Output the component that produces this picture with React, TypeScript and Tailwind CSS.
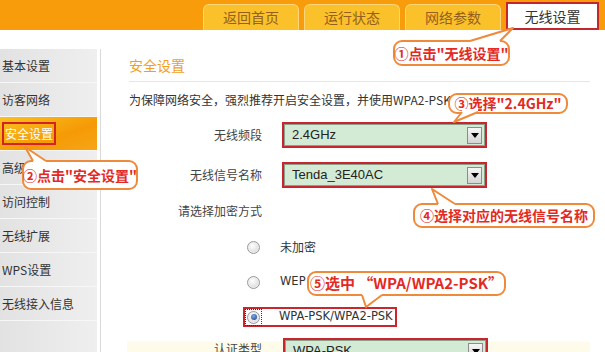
import React from "react";

const tabs = ["返回首页", "运行状态", "网络参数"];
const menu = ["基本设置", "访客网络", "安全设置", "高级设置", "访问控制", "无线扩展", "WPS设置", "无线接入信息"];

function Radio({ checked }: { checked?: boolean }) {
  return (
    <div className="w-[13px] h-[13px] rounded-full border border-[#999999] bg-[radial-gradient(circle_at_40%_35%,#ffffff,#cfcfcf)] shadow-[inset_0_0_0_1px_#eeeeee] flex items-center justify-center shrink-0">
      {checked ? <div className="w-[6px] h-[6px] rounded-full bg-[radial-gradient(circle_at_40%_35%,#7aa8e6,#1d3f86)]" /> : null}
    </div>
  );
}

function Select({ value }: { value: string }) {
  return (
    <div className="w-[205px] h-[26px] border-2 border-[#c8262e] bg-[#d3ebd4] flex items-center justify-between pl-[8px] pr-[3px] shadow-[inset_0_0_0_1px_#8aa08a]">
      <span className="font-['Liberation_Sans',sans-serif] text-[13px] text-[#222]">{value}</span>
      <div className="w-[15px] h-[17px] border border-[#8c8c8c] bg-[linear-gradient(#f6f6f6,#d4d4d4)] flex items-center justify-center">
        <div className="w-0 h-0 border-l-[4px] border-r-[4px] border-t-[5px] border-l-transparent border-r-transparent border-t-black" />
      </div>
    </div>
  );
}

export default function App() {
  return (
    <div className="relative w-[605px] h-[352px] overflow-hidden bg-white font-['Noto_Sans_CJK_SC','Liberation_Sans',sans-serif] text-[#333]">
      {/* top bar */}
      <div className="h-[30px] bg-[#f99c0c] flex items-end pl-[203px] gap-[5px]">
        {tabs.map((t) => (
          <div
            key={t}
            className="w-[96px] h-[26px] rounded-t-[6px] bg-[#fbc12a] border border-b-0 border-[#fdd77a] flex items-center justify-center text-[14px] text-[#946020]"
          >
            {t}
          </div>
        ))}
        <div className="w-[93px] h-[28px] bg-white border-2 border-[#c4262e] flex items-center justify-center text-[14px] text-[#333]">
          无线设置
        </div>
      </div>

      <div className="flex pt-[19px]">
        {/* sidebar */}
        <div className="w-[97px] h-[303px] bg-[linear-gradient(to_right,#e2e2e2,#efefef)] flex flex-col">
          {menu.map((m) =>
            m === "安全设置" ? (
              <div
                key={m}
                className="h-[34px] border-b border-[#f6f6f6] bg-[linear-gradient(160deg,#fbc21e,#f59a06_60%,#f7a516)] flex items-center pl-[2px]"
              >
                <div className="h-[23px] px-[1px] border-2 border-[#d2232a] flex items-center text-[12px] text-white">
                  {m}
                </div>
              </div>
            ) : (
              <div key={m} className="h-[34px] border-b border-[#f7f7f7] flex items-center pl-[2px] text-[12px] text-[#333]">
                {m}
              </div>
            )
          )}
        </div>
        <div className="w-[3px]" />
        {/* content */}
        <div className="flex-1 border-l border-[#d9d9d9] pl-[28px] pr-[15px] flex flex-col">
          <div className="h-[33px] border-b border-[#e6e6e6] flex items-center text-[14px] text-[#f0a01e]">安全设置</div>
          <div className="h-[36px] flex items-center text-[12px] text-[#333] whitespace-nowrap">
            为保障网络安全，强烈推荐开启安全设置，并使用WPA2-PSK AES
          </div>
          <div className="mt-[4px] flex items-center">
            <div className="w-[133px] text-right text-[12px] text-[#444]">无线频段</div>
            <div className="ml-[20px]">
              <Select value="2.4GHz" />
            </div>
          </div>
          <div className="mt-[14px] flex items-center">
            <div className="w-[133px] text-right text-[12px] text-[#444]">无线信号名称</div>
            <div className="ml-[20px]">
              <Select value="Tenda_3E40AC" />
            </div>
          </div>
          <div className="mt-[11px] h-[24px] flex items-center">
            <div className="w-[133px] text-right text-[12px] text-[#444]">请选择加密方式</div>
          </div>
          <div className="mt-[14px] h-[20px] flex items-center pl-[118px]">
            <Radio />
            <span className="ml-[20px] text-[12px] text-[#333]">未加密</span>
          </div>
          <div className="mt-[15px] h-[20px] flex items-center pl-[118px]">
            <Radio />
            <span className="ml-[20px] font-['DejaVu_Sans',sans-serif] text-[11.5px] text-[#333]">WEP</span>
          </div>
          <div className="mt-[15px] ml-[114px] w-[154px] h-[20px] border-2 border-[#cc262d] flex items-center pl-[2px]">
            <div className="outline outline-1 outline-dotted outline-[#333] outline-offset-[1px]">
              <Radio checked />
            </div>
            <span className="ml-[19px] font-['DejaVu_Sans',sans-serif] text-[11.5px] text-[#333] whitespace-nowrap">WPA-PSK/WPA2-PSK</span>
          </div>
          <div className="mt-[11px] -ml-[2px] pl-[2px] flex items-start bg-[linear-gradient(to_bottom,#ffffff_0px,#ffffff_3px,#fefbea_4px)]">
            <div className="w-[133px] pt-[2px] text-right text-[12px] text-[#444]">认证类型</div>
            <div className="ml-[21px]">
              <Select value="WPA-PSK" />
            </div>
          </div>
        </div>
      </div>

      {/* callouts */}
      <div className="absolute left-[393px] top-[40px] w-[117px] h-[26px] rounded-[9px] border-2 border-[#ef8a3b] bg-white flex items-center justify-center text-[14px] font-bold text-[#e42a1f] whitespace-nowrap">
        ①点击"无线设置"
      </div>
      <div className="absolute left-[22px] top-[160px] w-[116px] h-[30px] rounded-[9px] border-2 border-[#ef8a3b] bg-white flex items-center justify-center text-[14px] font-bold text-[#e42a1f] whitespace-nowrap">
        ②点击"安全设置"
      </div>
      <div className="absolute left-[448px] top-[93px] w-[120px] h-[21px] rounded-[9px] border-2 border-[#ef8a3b] bg-white flex items-center justify-center text-[14px] font-bold text-[#e42a1f] whitespace-nowrap">
        ③选择"2.4GHz"
      </div>
      <div className="absolute left-[413px] top-[203px] w-[182px] h-[25px] rounded-[9px] border-2 border-[#ef8a3b] bg-white flex items-center justify-center text-[14px] font-bold text-[#e42a1f] whitespace-nowrap">
        ④选择对应的无线信号名称
      </div>
      <div className="absolute left-[307px] top-[271px] w-[199px] h-[25px] rounded-[9px] border-2 border-[#ef8a3b] bg-white flex items-center justify-center text-[15px] font-bold text-[#e42a1f] whitespace-nowrap">
        ⑤选中 “WPA/WPA2-PSK”
      </div>

      {/* callout tails */}
      <svg className="absolute left-0 top-0 pointer-events-none" width="605" height="352" viewBox="0 0 605 352">
        <g fill="#ffffff" stroke="none">
          <polygon points="470,41 513,28 500,41 500,44 470,44" />
          <polygon points="33,161 25,147 46,161 46,164 33,164" />
          <polygon points="462,112 454,122 478,112 478,109 462,109" />
          <polygon points="438,204 432,189 455,204 455,207 438,207" />
          <polygon points="362,295 366,307 382,295 382,292 362,292" />
        </g>
        <g fill="none" stroke="#ef8a3b" strokeWidth="2" strokeLinejoin="round">
          <polyline points="470,41 513,28 500,41" />
          <polyline points="33,161 25,147 46,161" />
          <polyline points="462,112 454,122 478,112" />
          <polyline points="438,204 432,189 455,204" />
          <polyline points="362,295 366,307 382,295" />
        </g>
      </svg>
    </div>
  );
}
